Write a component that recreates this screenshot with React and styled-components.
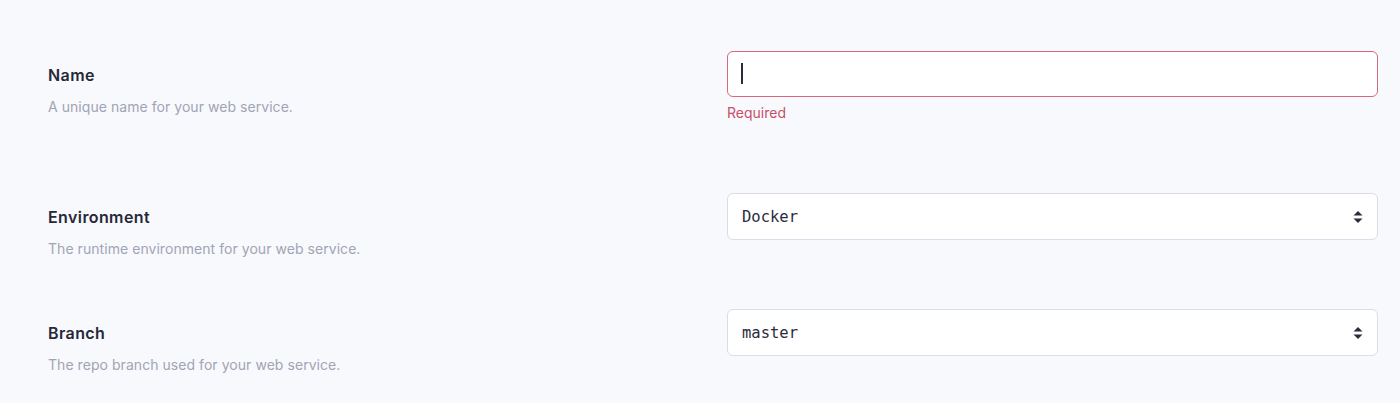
import React from "react";
import styled, { createGlobalStyle } from "styled-components";

const GlobalStyle = createGlobalStyle`
  body {
    margin: 0;
    background: #f8f9fc;
    font-family: Inter, "Noto Sans", sans-serif;
  }
`;

export default function App() {
  return (
    <>
      <GlobalStyle />
      <Page>
        <Row>
          <Info>
            <Label>Name</Label>
            <Desc>A unique name for your web service.</Desc>
          </Info>
          <Control>
            <FieldWrap>
              <TextInput type="text" $error />
              <Caret />
            </FieldWrap>
            <Error>Required</Error>
          </Control>
        </Row>

        <Row>
          <Info>
            <Label>Environment</Label>
            <Desc>The runtime environment for your web service.</Desc>
          </Info>
          <Control>
            <FieldWrap>
              <Select defaultValue="Docker">
                <option>Docker</option>
                <option>Node</option>
                <option>Python 3</option>
              </Select>
              <SortIcon />
            </FieldWrap>
          </Control>
        </Row>

        <Row>
          <Info>
            <Label>Branch</Label>
            <Desc>The repo branch used for your web service.</Desc>
          </Info>
          <Control>
            <FieldWrap>
              <Select defaultValue="master">
                <option>master</option>
                <option>develop</option>
              </Select>
              <SortIcon />
            </FieldWrap>
          </Control>
        </Row>
      </Page>
    </>
  );
}

function SortIcon() {
  return (
    <Arrows width="10" height="14" viewBox="0 0 10 14">
      <path d="M5 1 L9.5 5.5 L0.5 5.5 Z" fill="#2a2c3d" />
      <path d="M5 13 L9.5 8.5 L0.5 8.5 Z" fill="#2a2c3d" />
    </Arrows>
  );
}

const Page = styled.div`
  padding: 51px 22px 28px 48px;
  display: flex;
  flex-direction: column;
  gap: 50px;
`;

const Row = styled.div`
  display: grid;
  grid-template-columns: 1fr 651px;
  align-items: start;
`;

const Info = styled.div`
  padding-top: 14px;
`;

const Label = styled.div`
  font-size: 16px;
  line-height: 20px;
  font-weight: 600;
  letter-spacing: 0.4px;
  color: #262838;
`;

const Desc = styled.div`
  margin-top: 12px;
  font-size: 14px;
  line-height: 20px;
  letter-spacing: 0.05px;
  color: #a1a4b6;
`;

const Control = styled.div`
  display: flex;
  flex-direction: column;
`;

const FieldWrap = styled.div`
  position: relative;
`;

const TextInput = styled.input`
  box-sizing: border-box;
  width: 100%;
  height: 46px;
  padding: 0 14px;
  background: #fff;
  border: 1.5px solid ${(p) => (p.$error ? "#d8687c" : "#dcdfe9")};
  border-radius: 6px;
  outline: none;
  font-family: "DejaVu Sans Mono", monospace;
  font-size: 15px;
`;

const Caret = styled.span`
  position: absolute;
  left: 14px;
  top: 12px;
  width: 2px;
  height: 21px;
  background: #2a2c3d;
`;

const Error = styled.div`
  margin-top: 6px;
  margin-bottom: 20px;
  font-size: 14px;
  line-height: 20px;
  color: #c4506a;
`;

const Select = styled.select`
  box-sizing: border-box;
  width: 100%;
  height: 47px;
  padding: 0 14px;
  appearance: none;
  background: #fff;
  border: 1px solid #dadde8;
  border-radius: 6px;
  outline: none;
  color: #2a2c3d;
  font-family: "DejaVu Sans Mono", monospace;
  font-size: 15.5px;
`;

const Arrows = styled.svg`
  position: absolute;
  right: 15px;
  top: 50%;
  transform: translateY(-50%);
  pointer-events: none;
`;
